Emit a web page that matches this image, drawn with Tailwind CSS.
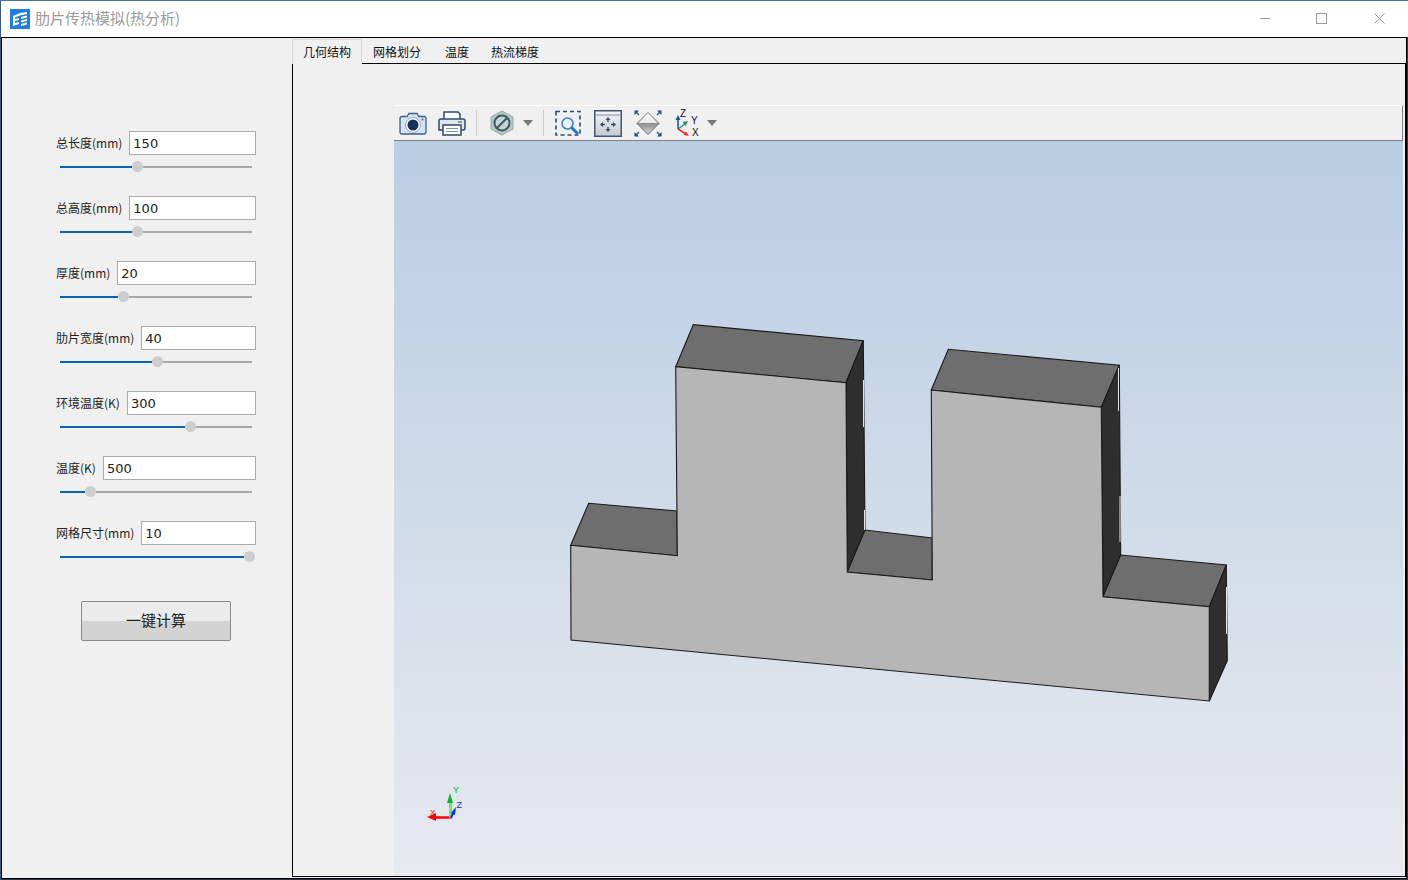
<!DOCTYPE html>
<html lang="zh-CN">
<head>
<meta charset="UTF-8">
<title>肋片传热模拟(热分析)</title>
<script src="https://cdn.jsdelivr.net/npm/@tailwindcss/browser@4"></script>
</head>
<body class="w-[1408px] h-[880px] overflow-hidden font-['Noto_Sans_CJK_SC',sans-serif]">
<div class="w-full h-full flex flex-col bg-[#2a3a45] border-t border-t-[#4a6fa5] border-l border-l-[#3c5a7d] pb-[1px]">

  <!-- title bar -->
  <div class="h-[36px] shrink-0 bg-white flex items-center">
    <svg class="ml-[9px]" width="20" height="20" viewBox="0 0 20 20">
      <rect width="20" height="20" fill="#1f7de6"/>
      <path d="M3 7L10 4L17 3V5L10 6.5L5 8.5V10L9 9V11L5 12V14L9 13V15L3 17Z" fill="#fff"/>
      <path d="M11 8L17 6.5V8.5L11 10ZM11 11.5L17 10V12L11 13.5ZM11 15L17 13.5V15.5L11 17Z" fill="#fff"/>
    </svg>
    <span class="ml-[5px] pb-[4px] text-[15px] leading-none text-[#9a9a9a]">肋片传热模拟(热分析)</span>
    <div class="ml-auto pb-[2px] flex items-center">
      <div class="w-[54px] flex justify-center"><svg width="10" height="10" viewBox="0 0 10 10"><path d="M0 5.5H10" stroke="#999" fill="none"/></svg></div>
      <div class="w-[58px] flex justify-center"><svg width="11" height="11" viewBox="0 0 11 11"><rect x="0.5" y="0.5" width="10" height="10" stroke="#999" fill="none"/></svg></div>
      <div class="w-[58px] flex justify-center"><svg width="11" height="11" viewBox="0 0 11 11"><path d="M0.5 0.5L10.5 10.5M10.5 0.5L0.5 10.5" stroke="#999" fill="none"/></svg></div>
    </div>
  </div>

  <!-- main -->
  <div class="flex-1 min-h-0 flex border border-black mr-[1px] bg-[#f0f0f0]">

    <!-- parameters -->
    <div class="w-[290px] shrink-0 pt-[93px] text-[12px] text-[#222]">
      <div class="mb-[24px]">
        <div class="ml-[54px] w-[200px] h-[24px] flex items-center gap-[7px]">
          <span class="whitespace-nowrap">总长度(mm)</span>
          <div class="flex-1 h-[24px] bg-white border border-[#ababab] pl-[3px] pt-[2px] flex items-center font-['DejaVu_Sans',sans-serif] text-[13px] text-[#222]">150</div>
        </div>
        <div class="ml-[58px] w-[192px] mt-[6px] h-[11px] flex items-center">
          <div class="w-[72px] h-[2px] bg-[#0a64ad]"></div>
          <div class="w-[11px] h-[11px] shrink-0 rounded-full bg-[#cdcdcd]"></div>
          <div class="flex-1 h-[2px] bg-[#a8a8a8]"></div>
        </div>
      </div>
      <div class="mb-[24px]">
        <div class="ml-[54px] w-[200px] h-[24px] flex items-center gap-[7px]">
          <span class="whitespace-nowrap">总高度(mm)</span>
          <div class="flex-1 h-[24px] bg-white border border-[#ababab] pl-[3px] pt-[2px] flex items-center font-['DejaVu_Sans',sans-serif] text-[13px] text-[#222]">100</div>
        </div>
        <div class="ml-[58px] w-[192px] mt-[6px] h-[11px] flex items-center">
          <div class="w-[72px] h-[2px] bg-[#0a64ad]"></div>
          <div class="w-[11px] h-[11px] shrink-0 rounded-full bg-[#cdcdcd]"></div>
          <div class="flex-1 h-[2px] bg-[#a8a8a8]"></div>
        </div>
      </div>
      <div class="mb-[24px]">
        <div class="ml-[54px] w-[200px] h-[24px] flex items-center gap-[7px]">
          <span class="whitespace-nowrap">厚度(mm)</span>
          <div class="flex-1 h-[24px] bg-white border border-[#ababab] pl-[3px] pt-[2px] flex items-center font-['DejaVu_Sans',sans-serif] text-[13px] text-[#222]">20</div>
        </div>
        <div class="ml-[58px] w-[192px] mt-[6px] h-[11px] flex items-center">
          <div class="w-[58px] h-[2px] bg-[#0a64ad]"></div>
          <div class="w-[11px] h-[11px] shrink-0 rounded-full bg-[#cdcdcd]"></div>
          <div class="flex-1 h-[2px] bg-[#a8a8a8]"></div>
        </div>
      </div>
      <div class="mb-[24px]">
        <div class="ml-[54px] w-[200px] h-[24px] flex items-center gap-[7px]">
          <span class="whitespace-nowrap">肋片宽度(mm)</span>
          <div class="flex-1 h-[24px] bg-white border border-[#ababab] pl-[3px] pt-[2px] flex items-center font-['DejaVu_Sans',sans-serif] text-[13px] text-[#222]">40</div>
        </div>
        <div class="ml-[58px] w-[192px] mt-[6px] h-[11px] flex items-center">
          <div class="w-[92px] h-[2px] bg-[#0a64ad]"></div>
          <div class="w-[11px] h-[11px] shrink-0 rounded-full bg-[#cdcdcd]"></div>
          <div class="flex-1 h-[2px] bg-[#a8a8a8]"></div>
        </div>
      </div>
      <div class="mb-[24px]">
        <div class="ml-[54px] w-[200px] h-[24px] flex items-center gap-[7px]">
          <span class="whitespace-nowrap">环境温度(K)</span>
          <div class="flex-1 h-[24px] bg-white border border-[#ababab] pl-[3px] pt-[2px] flex items-center font-['DejaVu_Sans',sans-serif] text-[13px] text-[#222]">300</div>
        </div>
        <div class="ml-[58px] w-[192px] mt-[6px] h-[11px] flex items-center">
          <div class="w-[125px] h-[2px] bg-[#0a64ad]"></div>
          <div class="w-[11px] h-[11px] shrink-0 rounded-full bg-[#cdcdcd]"></div>
          <div class="flex-1 h-[2px] bg-[#a8a8a8]"></div>
        </div>
      </div>
      <div class="mb-[24px]">
        <div class="ml-[54px] w-[200px] h-[24px] flex items-center gap-[7px]">
          <span class="whitespace-nowrap">温度(K)</span>
          <div class="flex-1 h-[24px] bg-white border border-[#ababab] pl-[3px] pt-[2px] flex items-center font-['DejaVu_Sans',sans-serif] text-[13px] text-[#222]">500</div>
        </div>
        <div class="ml-[58px] w-[192px] mt-[6px] h-[11px] flex items-center">
          <div class="w-[25px] h-[2px] bg-[#0a64ad]"></div>
          <div class="w-[11px] h-[11px] shrink-0 rounded-full bg-[#cdcdcd]"></div>
          <div class="flex-1 h-[2px] bg-[#a8a8a8]"></div>
        </div>
      </div>
      <div class="mb-[24px]">
        <div class="ml-[54px] w-[200px] h-[24px] flex items-center gap-[7px]">
          <span class="whitespace-nowrap">网格尺寸(mm)</span>
          <div class="flex-1 h-[24px] bg-white border border-[#ababab] pl-[3px] pt-[2px] flex items-center font-['DejaVu_Sans',sans-serif] text-[13px] text-[#222]">10</div>
        </div>
        <div class="ml-[58px] w-[195px] mt-[6px] h-[11px] flex items-center">
          <div class="w-[184px] h-[2px] bg-[#0a64ad]"></div>
          <div class="w-[11px] h-[11px] shrink-0 rounded-full bg-[#cdcdcd]"></div>
        </div>
      </div>
      <div class="ml-[79px] mt-[39px] w-[150px] h-[40px] pb-[2px] rounded-[2px] border border-[#8a8a8a] bg-[linear-gradient(#ececec_0,#ececec_50%,#d3d3d3_50%,#d3d3d3_100%)] flex items-center justify-center text-[15px] text-[#222]">一键计算</div>
    </div>

    <!-- tabs and 3D view -->
    <div class="flex-1 min-w-0 flex flex-col">
      <div class="h-[25px] shrink-0 flex text-[12px] leading-none text-[#111]">
        <div class="relative z-10 h-[25px] mt-[1px] px-[10px] bg-[#f0f0f0] border border-b-0 border-[#d9d9d9] flex items-center">几何结构</div>
        <div class="px-[11px] flex items-center mt-[2px]">网格划分</div>
        <div class="ml-[2px] px-[11px] flex items-center mt-[2px]">温度</div>
        <div class="px-[11px] flex items-center mt-[2px]">热流梯度</div>
      </div>
      <div class="flex-1 min-h-0 mb-[1px] border border-black pl-[101px] pt-[41px] pr-[2px] flex">
        <div class="flex-1 min-w-0 flex flex-col">
          <!-- toolbar -->
          <div class="h-[36px] shrink-0 bg-[#f0f0f0] border-t border-t-white border-b border-b-[#808080] border-r border-r-[#808080] flex items-center">
            <svg class="ml-[5px]" width="28" height="24" viewBox="0 0 28 24">
              <path d="M1 7.5Q1 5.5 3 5.5H8L10 2.5H18L20 5.5H25Q27 5.5 27 7.5V21Q27 23 25 23H3Q1 23 1 21Z" fill="#d5e3f2" stroke="#3c6088" stroke-width="1.3"/>
              <circle cx="14" cy="14" r="7.5" fill="#fff" stroke="#8fa9c6"/>
              <circle cx="14" cy="14" r="5.5" fill="#17305e"/>
              <circle cx="23.5" cy="8.5" r="1" fill="#3c6088"/>
            </svg>
            <svg class="ml-[11px]" width="28" height="26" viewBox="0 0 28 26">
              <path d="M6 9V2H20L22 4V9" fill="#fff" stroke="#2f4a68" stroke-width="1.5"/>
              <path d="M1 11Q1 9 3 9H25Q27 9 27 11V18Q27 20 25 20H1Z" fill="#dfe7ef" stroke="#2f4a68" stroke-width="1.5"/>
              <path d="M5 15H23V25H5Z" fill="#fff" stroke="#2f4a68" stroke-width="1.5"/>
              <path d="M8 18.5H20M8 21.5H20" stroke="#7f93a8"/>
              <path d="M20 12H24" stroke="#6f8298" stroke-width="1.5"/>
            </svg>
            <div class="ml-[10px] w-[1px] h-[26px] bg-[#c9c9c9]"></div>
            <svg class="ml-[13px]" width="24" height="26" viewBox="0 0 24 26">
              <path d="M12 1L23 7V19L12 25L1 19V7Z" fill="#b4c7c9" stroke="#94a9ac"/>
              <circle cx="12" cy="13" r="7.5" fill="#c6d5d6" stroke="#3d5a5e" stroke-width="2"/>
              <path d="M7 18L17 8" stroke="#3d5a5e" stroke-width="2"/>
            </svg>
            <svg class="ml-[8px]" width="12" height="7" viewBox="0 0 12 7"><path d="M1 0H11L6 6Z" fill="#777"/></svg>
            <div class="ml-[9px] w-[1px] h-[26px] bg-[#c9c9c9]"></div>
            <svg class="ml-[11px]" width="27" height="27" viewBox="0 0 27 27">
              <path d="M1 1.5H25V25H1Z" fill="none" stroke="#2f4a68" stroke-width="1.6" stroke-dasharray="4 3"/>
              <circle cx="12.5" cy="13.5" r="5.5" fill="#eef4fa" stroke="#3f86c4" stroke-width="1.6"/>
              <path d="M16.5 17.5L23 24" stroke="#1f76c0" stroke-width="3"/>
            </svg>
            <svg class="ml-[12px]" width="28" height="27" viewBox="0 0 28 27">
              <defs><linearGradient id="fit" x1="0" y1="0" x2="0" y2="1"><stop offset="0" stop-color="#f4f5f7"/><stop offset="1" stop-color="#c4cad3"/></linearGradient></defs>
              <rect x="0.75" y="0.75" width="26.5" height="25.5" fill="url(#fit)" stroke="#3d5676" stroke-width="1.5"/>
              <path d="M1.5 5H26.5" stroke="#7f8ea3"/>
              <path d="M14 9V12M14 17V20M8 14.5H11M17 14.5H20" stroke="#2f4a68" stroke-width="1.4"/>
              <path d="M14 7L11.5 10H16.5ZM14 22L11.5 19H16.5ZM6 14.5L9 12V17ZM22 14.5L19 12V17Z" fill="#2f4a68"/>
            </svg>
            <svg class="ml-[12px]" width="28" height="27" viewBox="0 0 28 27">
              <defs><linearGradient id="dia" x1="0" y1="0" x2="0" y2="1"><stop offset="0" stop-color="#ffffff"/><stop offset="0.5" stop-color="#e6e6e6"/><stop offset="0.5" stop-color="#8f8f8f"/><stop offset="1" stop-color="#d8d8d8"/></linearGradient></defs>
              <path d="M14 2.5L25 13.5L14 24.5L3 13.5Z" fill="url(#dia)" stroke="#6b6b6b"/>
              <path d="M2 2L5 5M26 2L23 5M2 25L5 22M26 25L23 22" stroke="#2f4a68" stroke-width="1.4"/>
              <path d="M0.5 0.5H5L0.5 5ZM27.5 0.5H23L27.5 5ZM0.5 26.5H5L0.5 22ZM27.5 26.5H23L27.5 22Z" fill="#2f4a68"/>
            </svg>
            <svg class="ml-[11px]" width="26" height="28" viewBox="0 0 26 28">
              <path d="M5 20V10" stroke="#1d4fa8" stroke-width="1.5"/><path d="M5 6L2.5 11H7.5Z" fill="#1d4fa8"/>
              <path d="M5 20L12 15" stroke="#1f9a55" stroke-width="1.5"/><path d="M15 12L9.5 13L12.5 17Z" fill="#1f9a55"/>
              <path d="M5 20L13 25" stroke="#e53030" stroke-width="1.5"/><path d="M16 27L13 22.5L10.5 26Z" fill="#e53030"/>
              <text x="7" y="8" font-size="10" font-family="Liberation Sans" fill="#111">Z</text>
              <text x="18" y="15" font-size="10" font-family="Liberation Sans" fill="#111">Y</text>
              <text x="19" y="27" font-size="10" font-family="Liberation Sans" fill="#111">X</text>
            </svg>
            <svg class="ml-[7px]" width="12" height="7" viewBox="0 0 12 7"><path d="M1 0H11L6 6Z" fill="#777"/></svg>
          </div>
          <!-- viewport -->
          <div class="flex-1 min-h-0 relative bg-[linear-gradient(#b9cde3,#e7eaef)]">
            <svg class="absolute inset-0" width="1009" height="735" viewBox="394 141 1009 735">
              <g stroke="#1a1a1a" stroke-width="1.1" stroke-linejoin="miter">
                <path fill="#6e6e6e" d="M570.7 545.3L588.7 503.3L677 511L677.3 555.7Z"/>
                <path fill="#6e6e6e" d="M675.7 366.7L693.3 324.7L863.3 340.7L846 382.7Z"/>
                <path fill="#2e2e2e" d="M846 382.7L863.3 340.7L865 530L847.3 572Z"/>
                <path fill="#6e6e6e" d="M847.3 572L865 530L932.3 538L932.3 580Z"/>
                <path fill="#6e6e6e" d="M931.3 390L948.3 349.3L1119.3 365.3L1101.3 407.3Z"/>
                <path fill="#2e2e2e" d="M1101.3 407.3L1119.3 365.3L1120.7 555L1103 596.7Z"/>
                <path fill="#6e6e6e" d="M1103 596.7L1120.7 555L1226.3 565L1209.3 606.7Z"/>
                <path fill="#2e2e2e" d="M1209.3 606.7L1226.3 565L1227.3 660.7L1209.3 701Z"/>
                <path fill="#b6b6b6" d="M570.7 545.3L677.3 555.7L675.7 366.7L846 382.7L847.3 572L932.3 580L931.3 390L1101.3 407.3L1103 596.7L1209.3 606.7L1209.3 701L571 640Z"/>
              </g>
              <!-- pale slivers along the silhouette -->
              <path d="M863.5 380V427M864.5 510V530M1118.5 368V411M1120 496V542M1226.5 587V634" stroke="#e4e4e4" stroke-width="1"/>
              <!-- orientation triad -->
              <path d="M451 817.5H432" stroke="#f00" stroke-width="2.5"/>
              <path d="M427 817L436 813V821Z" fill="#f00"/>
              <path d="M450.5 818V801" stroke="#6fe07f" stroke-width="3"/>
              <path d="M450 793L447 803H453Z" fill="#0fb02a"/>
              <path d="M451 818L454 811" stroke="#1030e0" stroke-width="2"/>
              <path d="M456 807L451 813L455 815Z" fill="#1030e0"/>
              <text x="430" y="815" font-size="8" font-family="Liberation Sans" fill="#f00">X</text>
              <text x="453" y="793" font-size="9" font-family="Liberation Sans" fill="#0fb02a">Y</text>
              <text x="456.5" y="808" font-size="9" font-family="Liberation Sans" fill="#1030e0">Z</text>
            </svg>
          </div>
        </div>
      </div>
    </div>
  </div>
</div>
</body>
</html>
